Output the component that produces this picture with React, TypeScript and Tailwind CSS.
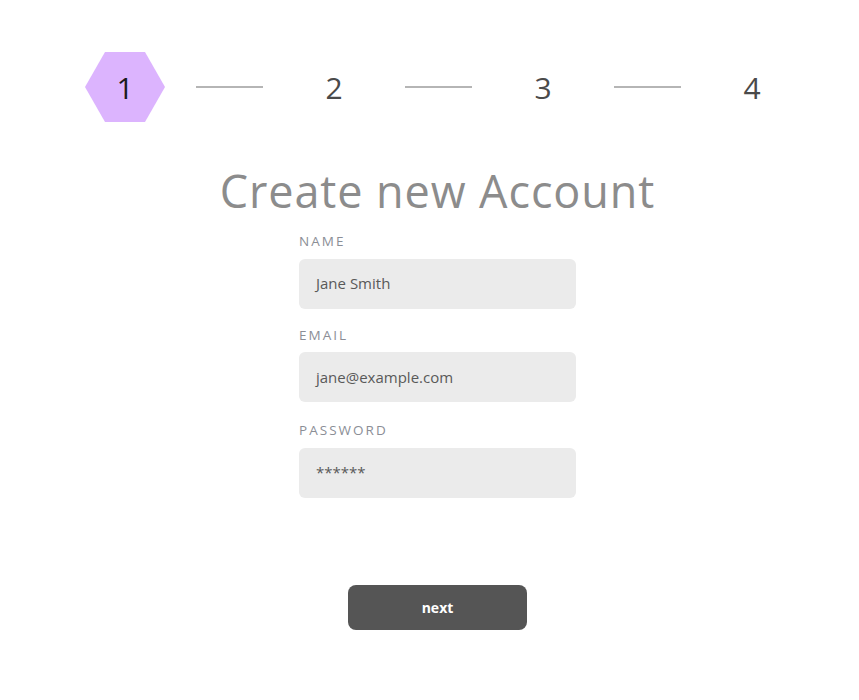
const steps = ['1', '2', '3', '4']

function Hexagon({ label }: { label: string }) {
  return (
    <div className="relative w-[80px] h-[70px] flex items-center justify-center">
      <svg className="absolute inset-0" width="80" height="70" viewBox="0 0 80 70">
        <polygon points="20,0 60,0 80,35 60,70 20,70 0,35" fill="#dcb4fe" />
      </svg>
      <span className="relative text-[30px] text-[#1b1b1b] font-['Open_Sans',sans-serif]">{label}</span>
    </div>
  )
}

function Field({ label, value, top }: { label: string; value: string; top: string }) {
  return (
    <div className={`flex flex-col ${top}`}>
      <label className="text-[13.5px] tracking-[0.15em] text-[#8b8e96] font-['Open_Sans',sans-serif] leading-none mb-[10px]">
        {label}
      </label>
      <div className="w-[277px] h-[50px] rounded-[6px] bg-[#ebebeb] flex items-center px-[17px] text-[15px] text-[#595959] font-['Open_Sans',sans-serif]">
        {value}
      </div>
    </div>
  )
}

export default function App() {
  return (
    <div className="w-[859px] h-[700px] bg-white flex flex-col">
      <div className="flex items-center gap-[31px] pl-[85px] pt-[52px]">
        {steps.map((s, i) => (
          <div key={s} className="flex items-center gap-[31px]">
            {i === 0 ? (
              <Hexagon label={s} />
            ) : (
              <div className="w-[80px] h-[70px] flex items-center justify-center text-[30px] text-[#4a4a4a] font-['Open_Sans',sans-serif]">
                {s}
              </div>
            )}
            {i < steps.length - 1 && <div className="w-[67px] h-[2px] bg-[#b5b5b5]" />}
          </div>
        ))}
      </div>

      <div className="pl-[16px] flex flex-col items-center">
        <h1 className="mt-[46px] text-center text-[45px] tracking-[0.02em] leading-none text-[#8c8c8c] font-['Open_Sans',sans-serif]">
          Create new Account
        </h1>

        <div className="flex flex-col mt-[22px]">
          <Field label="NAME" value="Jane Smith" top="" />
          <Field label="EMAIL" value="jane@example.com" top="mt-[20px]" />
          <Field label="PASSWORD" value="******" top="mt-[22px]" />
        </div>
        <button className="mt-[87px] w-[179px] h-[45px] rounded-[8px] bg-[#555555] text-white text-[14px] font-bold font-['Open_Sans',sans-serif]">
          next
        </button>
      </div>
    </div>
  )
}
